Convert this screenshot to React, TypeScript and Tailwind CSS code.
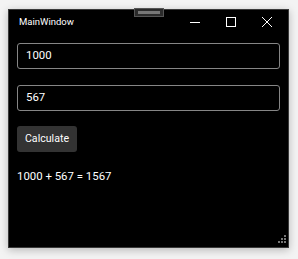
import React from 'react';

const App = () => {
  return (
    <div className="w-[298px] h-[259px] bg-[#f3f3f3] pt-[9px] pl-[8px]" style={{ fontFamily: 'Roboto, "Noto Sans", sans-serif' }}>
      <div className="relative w-[281px] h-[239px] bg-black border border-[#3a3a3a] shadow-[0_2px_8px_rgba(0,0,0,0.25)] flex flex-col">
        {/* snap handle */}
        <div className="absolute left-[125px] top-[-2px] w-[30px] h-[9px] bg-[#2b2b2b] border border-[#555] flex items-center justify-center">
          <div className="w-[22px] h-[3px] bg-[#777]" />
        </div>

        {/* title bar */}
        <div className="h-[24px] flex items-center text-white">
          <span className="pl-[10px] text-[9.5px] flex-1">MainWindow</span>
          <div className="w-[36px] h-full flex items-center justify-center">
            <svg width="10" height="10" viewBox="0 0 10 10"><path d="M0 5.5h10" stroke="#fff" strokeWidth="1" /></svg>
          </div>
          <div className="w-[36px] h-full flex items-center justify-center">
            <svg width="10" height="10" viewBox="0 0 10 10"><rect x="0.5" y="0.5" width="9" height="9" fill="none" stroke="#fff" strokeWidth="1" /></svg>
          </div>
          <div className="w-[36px] h-full flex items-center justify-center mr-[3px]">
            <svg width="10" height="10" viewBox="0 0 10 10"><path d="M0 0L10 10M10 0L0 10" stroke="#fff" strokeWidth="1" /></svg>
          </div>
        </div>

        {/* content */}
        <div className="flex flex-col px-[8px] pt-[9px]">
          <div className="w-[263px] h-[26px] rounded-[3px] border border-[#868686] flex items-center px-[8px] text-white text-[11.4px]">1000</div>
          <div className="mt-[16px] w-[263px] h-[26px] rounded-[3px] border border-[#868686] flex items-center px-[8px] text-white text-[11.4px]">567</div>
          <div className="mt-[15px] w-[60px] h-[26px] rounded-[3px] bg-[#333333] flex items-center justify-center text-white text-[10.6px]">Calculate</div>
          <div className="mt-[16px] text-white text-[11.4px]">1000 + 567 = 1567</div>
        </div>

        {/* resize grip */}
        <svg className="absolute right-[2px] bottom-[2px]" width="10" height="10" viewBox="0 0 10 10">
          <rect x="8" y="0" width="2" height="2" fill="#777" />
          <rect x="5" y="3" width="2" height="2" fill="#777" />
          <rect x="8" y="3" width="2" height="2" fill="#777" />
          <rect x="2" y="6" width="2" height="2" fill="#777" />
          <rect x="5" y="6" width="2" height="2" fill="#777" />
          <rect x="8" y="6" width="2" height="2" fill="#777" />
        </svg>
      </div>
    </div>
  );
};

export default App;
